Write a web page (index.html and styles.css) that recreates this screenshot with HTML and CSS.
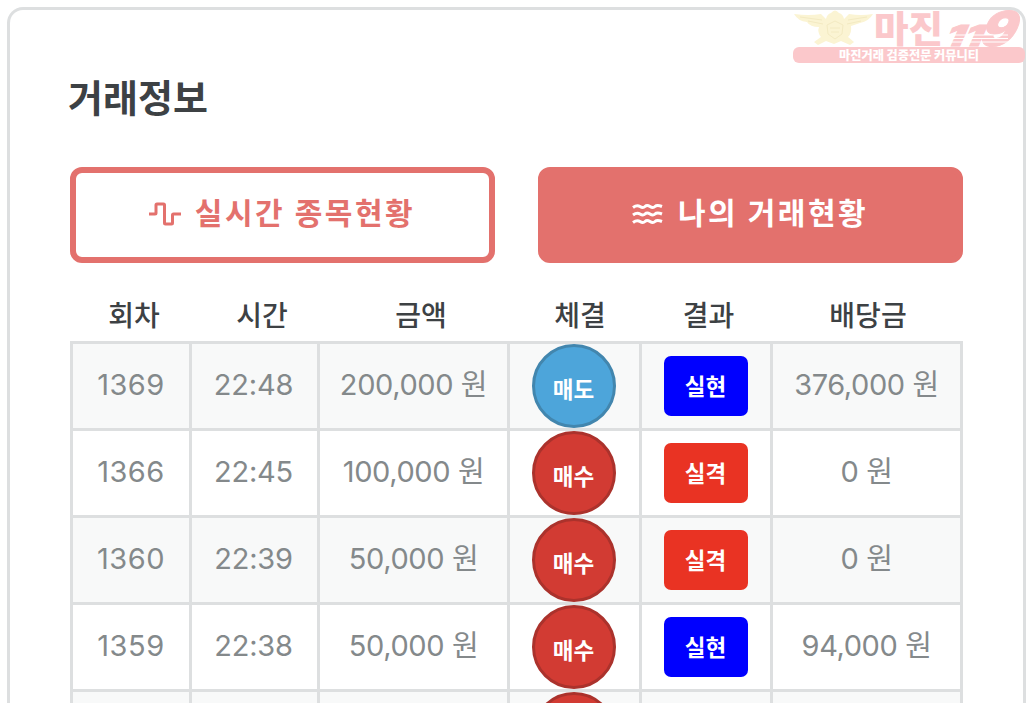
FILE: index.html
```
<!DOCTYPE html>
<html lang="ko">
<head>
    <meta charset="UTF-8">
    <meta name="viewport" content="width=device-width, initial-scale=1.0">
    <title>거래정보</title>
    <link rel="stylesheet" href="styles.css">
</head>
<body>
    <div class="card">
        <h2 class="title">거래정보</h2>
        <div class="tabs">
            <button class="tab">
                <svg class="tab__icon" viewBox="0 0 32 24"><path d="M0 12H6Q7 12 7 11V3Q7 2 8 2H14.500Q15.500 2 15.500 3V21Q15.500 22 16.500 22H22.500Q23.500 22 23.500 21V13Q23.500 12 24.500 12H32"/></svg>
                <span>실시간 종목현황</span>
            </button>
            <button class="tab active">
                <svg class="tab__icon" viewBox="0 0 32 24">
                    <path d="M1 5.500Q5 2.500 8 4.500T13 4.500T18 4.500T23 4.500T30 4.500"/>
                    <path d="M1 13Q5 10 8 12T13 12T18 12T23 12T30 12"/>
                    <path d="M1 20.500Q5 17.500 8 19.500T13 19.500T18 19.500T23 19.500T30 19.500"/>
                </svg>
                <span>나의 거래현황</span>
            </button>
        </div>
        <div class="head">
            <span>회차</span><span>시간</span><span>금액</span><span>체결</span><span>결과</span><span>배당금</span>
        </div>
        <table class="trades">
            <colgroup>
                <col class="col-round"><col class="col-time"><col class="col-money"><col class="col-side"><col class="col-result"><col class="col-money">
            </colgroup>
            <tbody>
                <tr>
                    <td>1369</td><td>22:48</td><td>200,000 원</td>
                    <td><span class="side sell">매도</span></td>
                    <td><span class="badge win">실현</span></td>
                    <td>376,000 원</td>
                </tr>
                <tr>
                    <td>1366</td><td>22:45</td><td>100,000 원</td>
                    <td><span class="side buy">매수</span></td>
                    <td><span class="badge lose">실격</span></td>
                    <td>0 원</td>
                </tr>
                <tr>
                    <td>1360</td><td>22:39</td><td>50,000 원</td>
                    <td><span class="side buy">매수</span></td>
                    <td><span class="badge lose">실격</span></td>
                    <td>0 원</td>
                </tr>
                <tr>
                    <td>1359</td><td>22:38</td><td>50,000 원</td>
                    <td><span class="side buy">매수</span></td>
                    <td><span class="badge win">실현</span></td>
                    <td>94,000 원</td>
                </tr>
                <tr>
                    <td></td><td></td><td></td>
                    <td><span class="side buy"></span></td>
                    <td></td><td></td>
                </tr>
            </tbody>
        </table>
    </div>

    <!-- watermark -->
    <svg class="logo" viewBox="0 0 236 58">
        <g class="logo__eagle">
            <path d="M2 6Q17 8 29 6L34 11Q35 6 39 5Q43 0 47 5Q51 6 52 11L57 6Q69 8 81 6Q77 13 68 15L59 18Q60 25 56 29L62 34L58 37L49 33L42 36L34 33L26 37L22 34L29 29Q25 24 27 19Q18 19 15 14Q6 13 2 6Z"/>
            <path class="logo__line" d="M8 9L30 12M16 13L31 16M75 9L56 12M69 13L55 16M35 17L43 13L51 17L50 26L43 31L36 26ZM38 20H48M39 24H47"/>
        </g>
        <text class="logo__name" x="82" y="35" textLength="69" lengthAdjust="spacingAndGlyphs">마진</text>
        <text class="logo__num" transform="translate(151 38) skewX(-24)" textLength="37" lengthAdjust="spacingAndGlyphs">11</text>
        <text class="logo__num big" transform="translate(184 38) skewX(-24)" textLength="35" lengthAdjust="spacingAndGlyphs">9</text>
        <path class="logo__stripe" d="M150 27H216M150 30.500H216M150 34H216"/>
        <rect class="logo__bar" x="1" y="39" width="232" height="16" rx="6"/>
        <text class="logo__sub" x="47" y="52" textLength="140" lengthAdjust="spacingAndGlyphs">마진거래 검증전문 커뮤니티</text>
    </svg>
</body>
</html>
```
FILE: styles.css
```
* {
    box-sizing: border-box;
}
body {
    margin: 0;
    padding: 7px 10px 0 7px;
    height: 703px;
    overflow: hidden;
    background-color: #fff;
    font-family: Inter, "Noto Sans CJK KR", sans-serif;
    color: #3d4144;
}
.card {
    height: 696px;
    overflow: hidden;
    padding: 60px 60px 0;
    border: 3px solid #dddfe0;
    border-bottom: none;
    border-radius: 16px 16px 0 0;
}
.title {
    margin: 0 0 41px -2px;
    font-size: 38px;
    font-weight: 700;
    line-height: 56px;
}
.tabs {
    display: flex;
    gap: 43px;
    width: 893px;
}
.tab {
    flex: 1;
    height: 96px;
    padding: 0 1px 8px 0;
    display: flex;
    justify-content: center;
    align-items: center;
    gap: 14px;
    border: 6px solid #e3716d;
    border-radius: 12px;
    background-color: #fff;
    color: #e3716d;
    font-family: inherit;
    font-size: 30px;
    font-weight: 700;
    letter-spacing: 2.5px;
}
.tab.active {
    background-color: #e3716d;
    color: #fff;
}
.tab__icon {
    width: 32px;
    height: 24px;
    margin-top: 6px;
    fill: none;
    stroke: currentColor;
    stroke-width: 3;
}
.head {
    display: grid;
    grid-template-columns: 128px 128px 190px 128px 129px 190px;
    height: 78px;
    padding-top: 32px;
    text-align: center;
    font-size: 28px;
    font-weight: 500;
    line-height: 42px;
}
.trades {
    width: 893px;
    table-layout: fixed;
    border-spacing: 0;
}
.col-round {
    width: 122px;
}
.col-time {
    width: 128px;
}
.col-money {
    width: 190px;
}
.col-side {
    width: 132px;
}
.col-result {
    width: 131px;
}
.trades td {
    height: 87px;
    padding: 0 0 2px;
    border-right: 3px solid #dddfe0;
    border-bottom: 3px solid #dddfe0;
    text-align: center;
    white-space: nowrap;
    font-size: 29px;
    font-weight: 400;
    letter-spacing: -0.4px;
    line-height: 40px;
    color: #84898b;
}
.trades td:first-child {
    border-left: 3px solid #dddfe0;
    letter-spacing: 0.5px;
}
.trades td:nth-child(2) {
    padding-right: 2px;
    letter-spacing: -0.2px;
}
.trades tr:first-child td {
    height: 90px;
    border-top: 3px solid #dddfe0;
}
.trades tr:nth-child(odd) td {
    background-color: #f8f9f9;
}
.trades td:nth-child(4) {
    padding: 0 2px 0 0;
}
.trades td:nth-child(5) {
    padding: 0;
}
.side,
.badge {
    display: block;
    width: 84px;
    margin: 0 auto;
    color: #fff;
    font-size: 22.5px;
    font-weight: 700;
    letter-spacing: 0;
}
.side {
    height: 84px;
    padding-top: 5px;
    border: 3px solid;
    border-radius: 50%;
    line-height: 76px;
}
.sell {
    background-color: #4da5da;
    border-color: #4286ae;
}
.buy {
    background-color: #d23b33;
    border-color: #ab322c;
}
.badge {
    height: 60px;
    padding-right: 1px;
    border-radius: 7px;
    line-height: 61px;
}
.win {
    background-color: #00f;
}
.lose {
    background-color: #e93323;
}
.logo {
    position: absolute;
    top: 8px;
    left: 792px;
    width: 236px;
    height: 58px;
    overflow: visible;
}
.logo__eagle {
    fill: #fbf4d3;
}
.logo__line {
    fill: none;
    stroke: #f3eac2;
}
.logo__name {
    fill: #fbc8cb;
    font-size: 37px;
    font-weight: 900;
}
.logo__num,
.logo__bar {
    fill: #fbc8cb;
}
.logo__num {
    font-size: 29px;
    font-weight: 900;
    stroke: #fbc8cb;
    stroke-width: 1;
}
.logo__num.big {
    font-size: 48px;
}
.logo__stripe {
    stroke: #fff;
    stroke-width: 1;
}
.logo__sub {
    fill: #fff;
    font-size: 12px;
    font-weight: 900;
}
```
